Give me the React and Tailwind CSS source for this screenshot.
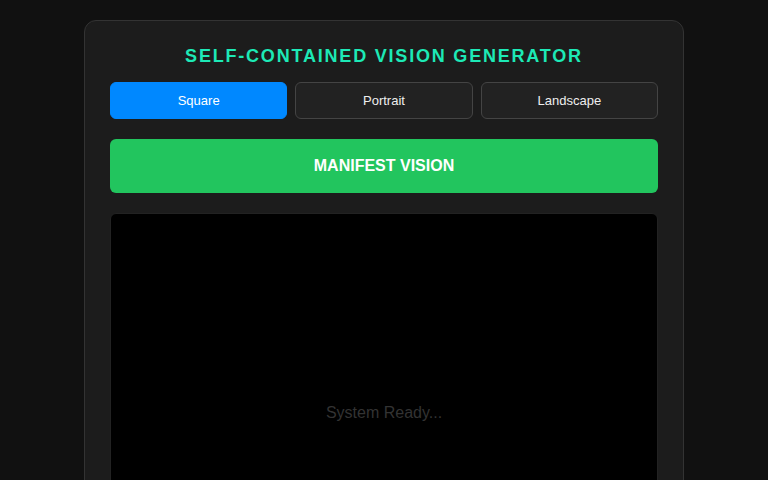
import React, { useState } from "react";

const RATIOS = ["Square", "Portrait", "Landscape"];

export default function App() {
  const [ratio, setRatio] = useState("Square");

  return (
    <div className="min-h-screen bg-[#111111] pt-5 font-['Liberation_Sans',Arial,sans-serif]">
      <div className="mx-auto w-[600px] rounded-xl border border-[#333333] bg-[#1c1c1c] p-[25px]">
        {/* title */}
        <h1 className="text-center text-[18px] font-bold leading-5 tracking-[1.8px] text-[#1de9b6]">
          SELF-CONTAINED VISION GENERATOR
        </h1>

        {/* ratio picker */}
        <div className="mt-4 grid grid-cols-3 gap-2">
          {RATIOS.map((r) => (
            <button
              key={r}
              onClick={() => setRatio(r)}
              className={
                r === ratio
                  ? "h-[37px] rounded-md border border-[#0088ff] bg-[#0088ff] text-[13px] text-white"
                  : "h-[37px] rounded-md border border-[#444444] bg-[#222222] text-[13px] text-[#eeeeee]"
              }
            >
              {r}
            </button>
          ))}
        </div>

        <button className="mt-5 h-[54px] w-full rounded-md bg-[#22c55e] text-[16px] font-bold text-white">
          MANIFEST VISION
        </button>

        {/* output */}
        <div className="mt-5 flex h-[400px] items-center justify-center rounded-md border border-[#222222] bg-black">
          <span className="text-[16px] text-[#333333]">System Ready...</span>
        </div>
      </div>
    </div>
  );
}
